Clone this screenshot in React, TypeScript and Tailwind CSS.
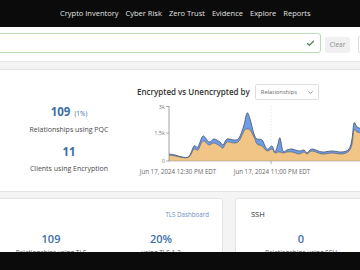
import React from "react";
import { Check, ChevronDown } from "lucide-react";

type P = [number, number];

function smooth(pts: P[]): string {
  let d = `M${pts[0][0]},${pts[0][1]}`;
  for (let i = 0; i < pts.length - 1; i++) {
    const p0 = pts[i - 1] || pts[i];
    const p1 = pts[i];
    const p2 = pts[i + 1];
    const p3 = pts[i + 2] || p2;
    const c1x = p1[0] + (p2[0] - p0[0]) / 6;
    const c1y = p1[1] + (p2[1] - p0[1]) / 6;
    const c2x = p2[0] - (p3[0] - p1[0]) / 6;
    const c2y = p2[1] - (p3[1] - p1[1]) / 6;
    d += ` C${c1x.toFixed(1)},${c1y.toFixed(1)} ${c2x.toFixed(1)},${c2y.toFixed(1)} ${p2[0]},${p2[1]}`;
  }
  return d;
}

const data: [number, number, number][] = [
  [167, 155, 156], [173, 156, 157], [180, 158, 158.5], [187, 157.5, 158], [192, 147, 150],
  [196, 148, 151], [201, 137, 142], [207, 143, 146], [212, 140, 144], [218, 143, 147],
  [221, 146, 149], [225, 140, 143], [232, 141, 144], [237, 139, 142], [242, 126, 132],
  [245, 114, 130], [248, 120, 131], [252, 135, 138], [255, 140, 145], [260, 141, 147],
  [265, 150, 152], [270, 147, 150], [273, 153, 154], [276, 145, 153], [278, 139, 153],
  [281, 152, 154], [285, 151, 153], [290, 150, 153], [297, 152, 155], [302, 151, 153],
  [305, 154, 155], [310, 150, 152], [320, 153, 155], [330, 152, 154], [340, 153, 155],
  [347, 150, 152], [350, 140, 145], [352, 124, 131], [355, 128, 133], [360, 130, 134],
  [366, 132, 135],
];

const BASE = 162;

function Chart() {
  const total: P[] = data.map((d) => [d[0], d[1]]);
  const unenc: P[] = data.map((d) => [d[0], d[2]]);
  const tLine = smooth(total);
  const uLine = smooth(unenc);
  const first = data[0][0];
  const last = data[data.length - 1][0];
  const tArea = `${tLine} L${last},${BASE} L${first},${BASE} Z`;
  const uArea = `${uLine} L${last},${BASE} L${first},${BASE} Z`;
  return (
    <svg width="230" height="78" className="block">
      <g transform="translate(-135,-102)">
        <line x1="269" y1="107" x2="269" y2="162" stroke="#d8d8d8" strokeWidth="0.6" strokeDasharray="1.5 1.5" />
        <path d={tArea} fill="#6e9de6" />
        <path d={uArea} fill="#f0c585" />
        <path d={tLine} fill="none" stroke="#4f5e78" strokeWidth="0.9" />
        <path d={uLine} fill="none" stroke="#5d6678" strokeWidth="0.7" />
        <line x1="167" y1="107" x2="167" y2="162.5" stroke="#8a8a8a" strokeWidth="0.8" />
        <line x1="167" y1="162" x2="370" y2="162" stroke="#9a9a9a" strokeWidth="0.6" />
        <line x1="164" y1="107.5" x2="167" y2="107.5" stroke="#8a8a8a" strokeWidth="0.7" />
        <line x1="164" y1="134" x2="167" y2="134" stroke="#8a8a8a" strokeWidth="0.7" />
        <line x1="164" y1="162" x2="167" y2="162" stroke="#8a8a8a" strokeWidth="0.7" />
        <line x1="269" y1="162" x2="269" y2="165" stroke="#8a8a8a" strokeWidth="0.7" />
        <g fontFamily="'Open Sans', sans-serif" fontSize="5.6" fill="#777">
          <text x="163" y="110" textAnchor="end">3k</text>
          <text x="163" y="136" textAnchor="end">1.5k</text>
          <text x="163" y="164" textAnchor="end">0</text>
          <text x="176" y="174.5" textAnchor="middle" fontSize="6.2" fill="#666">Jun 17, 2024 12:30 PM EDT</text>
          <text x="270" y="174.5" textAnchor="middle" fontSize="6.2" fill="#666">Jun 17, 2024 11:00 PM EDT</text>
        </g>
      </g>
    </svg>
  );
}

export default function App() {
  const nav = ["Crypto Inventory", "Cyber Risk", "Zero Trust", "Evidence", "Explore", "Reports"];
  return (
    <div
      className="w-[360px] h-[270px] overflow-hidden flex flex-col bg-white"
      style={{ fontFamily: "'Open Sans', 'Noto Sans', sans-serif" }}
    >
      <div className="h-[27px] shrink-0 bg-[#0b0b0b] flex items-center pl-[60px] gap-[7px] text-[7.5px] font-medium text-[#e2e2e2] whitespace-nowrap">
        {nav.map((n) => (
          <span key={n}>{n}</span>
        ))}
      </div>

      <div className="flex-1 overflow-hidden bg-[#f4f4f5]">
        <div className="h-[35px] bg-white border-b border-[#e6e6e6] flex items-end pb-[8px] gap-[4px] overflow-hidden">
          <div className="-ml-[6px] w-[327px] shrink-0 h-[20px] border-[1.5px] border-[#b8deb2] rounded-[3px] bg-white flex items-center justify-end pr-[5px]">
            <Check size={9} strokeWidth={3.2} color="#4c7c55" />
          </div>
          <div className="w-[25px] shrink-0 h-[16px] rounded-[2px] bg-[#f0f0f0] text-[6.5px] text-[#8c8c8c] flex items-center justify-center">
            Clear
          </div>
          <div className="ml-[4px] w-[20px] shrink-0 h-[17px] rounded-[2px] border border-[#dcdcdc] bg-white" />
        </div>

        <div className="mt-[7px] -ml-[10px] w-[385px] h-[123px] bg-white border border-[#e4e4e4] rounded-[3px] flex">
          <div className="w-[146px] shrink-0 flex flex-col items-center pl-[10px] pt-[33px]">
            <div className="leading-[14px] text-[#3d6ea6] whitespace-nowrap">
              <span className="text-[11.5px] font-bold">109</span>
              <span className="text-[6.5px] ml-[4px]">(1%)</span>
            </div>
            <div className="mt-[4px] leading-[10px] text-[7px] font-medium text-[#4a4a4a] whitespace-nowrap">
              Relationships using PQC
            </div>
            <div className="mt-[10px] leading-[14px] text-[11.5px] font-bold text-[#3d6ea6]">11</div>
            <div className="mt-[5px] leading-[10px] text-[7px] font-medium text-[#4a4a4a] whitespace-nowrap">
              Clients using Encryption
            </div>
          </div>
          <div className="flex flex-col pt-[14px]">
            <div className="flex items-center gap-[5px] h-[16px]">
              <span className="text-[8px] font-semibold text-[#333] whitespace-nowrap">Encrypted vs Unencrypted by</span>
              <div className="w-[64px] h-[16px] border border-[#dedede] rounded-[2px] flex items-center justify-between pl-[5px] pr-[4px]">
                <span className="text-[5.8px] text-[#666]">Relationships</span>
                <ChevronDown size={7} strokeWidth={2.5} color="#666" />
              </div>
            </div>
            <div className="mt-[1px]">
              <Chart />
            </div>
          </div>
        </div>

        <div className="mt-[6px] flex gap-[12px]">
          <div className="-ml-[10px] w-[233px] h-[80px] shrink-0 bg-white border border-[#e4e4e4] rounded-[3px] flex flex-col pl-[10px]">
            <div className="pt-[11px] pr-[13px] leading-[10px] text-right text-[6.2px] text-[#6d8fbd]">TLS Dashboard</div>
            <div className="mt-[12px] flex">
              <div className="w-[100px] flex flex-col items-center">
                <div className="leading-[14px] text-[11px] font-semibold text-[#3d6ea6]">109</div>
                <div className="mt-[2px] text-[6.5px] leading-[9px] text-[#555] whitespace-nowrap">Relationships using TLS</div>
              </div>
              <div className="w-[120px] flex flex-col items-center">
                <div className="leading-[14px] text-[11px] font-semibold text-[#3d6ea6]">20%</div>
                <div className="mt-[2px] text-[6.5px] leading-[9px] text-[#555] whitespace-nowrap">using TLS 1.3</div>
              </div>
            </div>
          </div>
          <div className="w-[140px] h-[80px] shrink-0 bg-white border border-[#e4e4e4] rounded-[3px] flex flex-col pl-[15px]">
            <div className="pt-[10px] leading-[10px] text-[7.5px] font-medium text-[#333]">SSH</div>
            <div className="mt-[13px] w-[100px] flex flex-col items-center">
              <div className="leading-[14px] text-[11px] font-semibold text-[#3d6ea6]">0</div>
              <div className="mt-[2px] text-[6.5px] leading-[9px] text-[#555] whitespace-nowrap">Relationships using SSH</div>
            </div>
          </div>
        </div>
      </div>

      <div className="h-[18px] shrink-0 bg-[#0b0b0b]" />
    </div>
  );
}
